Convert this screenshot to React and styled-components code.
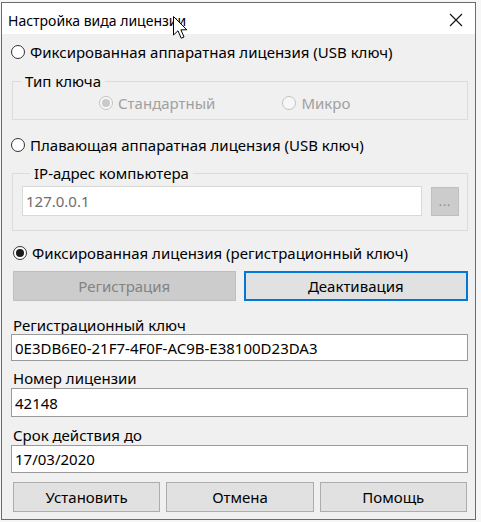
import React from 'react';
import styled, { createGlobalStyle } from 'styled-components';

const GlobalStyle = createGlobalStyle`
  html, body {
    margin: 0;
    padding: 0;
    background: #f6f6f6;
  }
  body {
    font-family: "Noto Sans", "Open Sans", sans-serif;
    color: #000;
  }
`;

const Dialog = styled.div`
  position: relative;
  width: 473px;
  height: 516px;
  margin: 2px 0 0 1px;
  border: 1px solid #6b6b6b;
  background: #f0f0f0;
  display: flex;
  flex-direction: column;
  box-sizing: content-box;
`;

const TitleBar = styled.div`
  height: 31px;
  box-sizing: border-box;
  background: #fff;
  display: flex;
  align-items: center;
  justify-content: space-between;
  padding: 3px 12px 0 6px;
  font-size: 14px;
  flex: none;
`;

const Body = styled.div`
  display: flex;
  flex-direction: column;
  padding: 6px 7px 0 9px;
`;

const RadioRow = styled.label`
  display: flex;
  align-items: center;
  height: ${p => p.$h || 24}px;
  margin-top: ${p => p.$mt || 0}px;
  margin-left: ${p => p.$ml || 0}px;
  font-size: 15px;
  gap: 5px;
  color: ${p => (p.$disabled ? '#a0a0a0' : '#000')};
  white-space: nowrap;
  flex: none;
`;

const RadioDot = styled.span`
  width: 12px;
  height: 12px;
  border-radius: 50%;
  border: 1px solid ${p => (p.$disabled ? '#c3c3c3' : '#333')};
  background: ${p => (p.$disabled ? '#f7f7f7' : '#fff')};
  display: inline-flex;
  align-items: center;
  justify-content: center;
  flex: none;

  &::after {
    content: '';
    width: 8px;
    height: 8px;
    border-radius: 50%;
    background: ${p => (p.$disabled ? '#c9c9c9' : '#1a1a1a')};
    display: ${p => (p.$checked ? 'block' : 'none')};
  }
`;

const Group = styled.fieldset`
  margin: ${p => p.$mt || 0}px 0 0 1px;
  padding: ${p => p.$pad};
  border: 1px solid #dcdcdc;
  min-width: 0;
  flex: none;
`;

const Legend = styled.legend`
  font-size: 15px;
  line-height: 20px;
  padding: 0 4px;
  margin-left: 8px;
  color: #000;
`;

const KeyTypes = styled.div`
  display: flex;
  padding-left: 86px;
  gap: 67px;
`;

const IpRow = styled.div`
  display: flex;
  align-items: flex-start;
  gap: 9px;
`;

const TextInput = styled.div`
  flex: ${p => (p.$grow ? '1 1 auto' : 'none')};
  height: ${p => p.$h}px;
  margin-top: ${p => p.$mt || 0}px;
  box-sizing: border-box;
  background: #fff;
  border: 1px solid ${p => (p.$disabled ? '#d9d9d9' : '#9a9a9a')};
  font-size: 15px;
  color: ${p => (p.$disabled ? '#6d6d6d' : '#000')};
  display: flex;
  align-items: center;
  padding-left: 3px;
`;

const DotsButton = styled.div`
  width: 28px;
  height: 29px;
  margin-top: 1px;
  box-sizing: border-box;
  background: #cccccc;
  border: 1px solid #bfbfbf;
  color: #8a8a8a;
  font-size: 12px;
  display: flex;
  align-items: center;
  justify-content: center;
  letter-spacing: 1px;
  flex: none;
`;

const ButtonRow = styled.div`
  display: flex;
  flex: none;
  gap: ${p => p.$gap}px;
  margin-top: ${p => p.$mt}px;
  padding: 0 ${p => p.$pr || 0}px 0 ${p => p.$pl || 0}px;
`;

const Button = styled.div`
  flex: 1;
  height: ${p => p.$h}px;
  box-sizing: border-box;
  display: flex;
  align-items: center;
  justify-content: center;
  font-size: 15px;
  background: ${p => (p.$disabled ? '#cccccc' : '#e1e1e1')};
  color: ${p => (p.$disabled ? '#838383' : '#000')};
  border: ${p =>
    p.$focused ? '2px solid #0078d7' : p.$disabled ? '1px solid #bfbfbf' : '1px solid #adadad'};
`;

const FieldLabel = styled.div`
  font-size: 15px;
  line-height: 18px;
  margin-top: ${p => p.$mt}px;
  padding-left: 2px;
  flex: none;
`;

const Cursor = styled.svg`
  position: absolute;
  left: 170px;
  top: 12px;
`;

export default function App() {
  return (
    <>
      <GlobalStyle />
      <Dialog>
        <TitleBar>
          <span>Настройка вида лицензии</span>
          <svg width="14" height="14" viewBox="0 0 14 14">
            <path d="M1 1 L13 13 M13 1 L1 13" stroke="#111" strokeWidth="1.1" />
          </svg>
        </TitleBar>
        <Cursor width="20" height="28" viewBox="0 0 20 28">
          <path
            d="M1.5 1.5 L1.5 20 L6 15.8 L9.2 23.2 L12 22 L8.9 14.8 L14.8 14.8 Z"
            fill="#fff"
            stroke="#000"
            strokeWidth="1"
            strokeLinejoin="round"
          />
        </Cursor>
        <Body>
          <RadioRow>
            <RadioDot />
            Фиксированная аппаратная лицензия (USB ключ)
          </RadioRow>
          <Group $mt={7} $pad="2px 0 6px 0">
            <Legend>Тип ключа</Legend>
            <KeyTypes>
              <RadioRow $h={20} $disabled>
                <RadioDot $disabled $checked />
                Стандартный
              </RadioRow>
              <RadioRow $h={20} $disabled>
                <RadioDot $disabled />
                Микро
              </RadioRow>
            </KeyTypes>
          </Group>
          <RadioRow $mt={13}>
            <RadioDot />
            Плавающая аппаратная лицензия (USB ключ)
          </RadioRow>
          <Group $mt={6} $pad="3px 8px 14px 9px">
            <Legend>IP-адрес компьютера</Legend>
            <IpRow>
              <TextInput $h={30} $grow $disabled>127.0.0.1</TextInput>
              <DotsButton>...</DotsButton>
            </IpRow>
          </Group>
          <RadioRow $mt={10} $ml={2}>
            <RadioDot $checked />
            Фиксированная лицензия (регистрационный ключ)
          </RadioRow>
          <ButtonRow $gap={8} $mt={6} $pl={2} $pr={0}>
            <Button $h={30} $disabled>Регистрация</Button>
            <Button $h={30} $focused>Деактивация</Button>
          </ButtonRow>
          <FieldLabel $mt={15}>Регистрационный ключ</FieldLabel>
          <TextInput $h={27}>0E3DB6E0-21F7-4F0F-AC9B-E38100D23DA3</TextInput>
          <FieldLabel $mt={8}>Номер лицензии</FieldLabel>
          <TextInput $h={29} $mt={1}>42148</TextInput>
          <FieldLabel $mt={9}>Срок действия до</FieldLabel>
          <TextInput $h={28} $mt={1}>17/03/2020</TextInput>
          <ButtonRow $gap={6} $mt={9} $pl={2} $pr={1}>
            <Button $h={30}>Установить</Button>
            <Button $h={30}>Отмена</Button>
            <Button $h={30}>Помощь</Button>
          </ButtonRow>
        </Body>
      </Dialog>
    </>
  );
}
